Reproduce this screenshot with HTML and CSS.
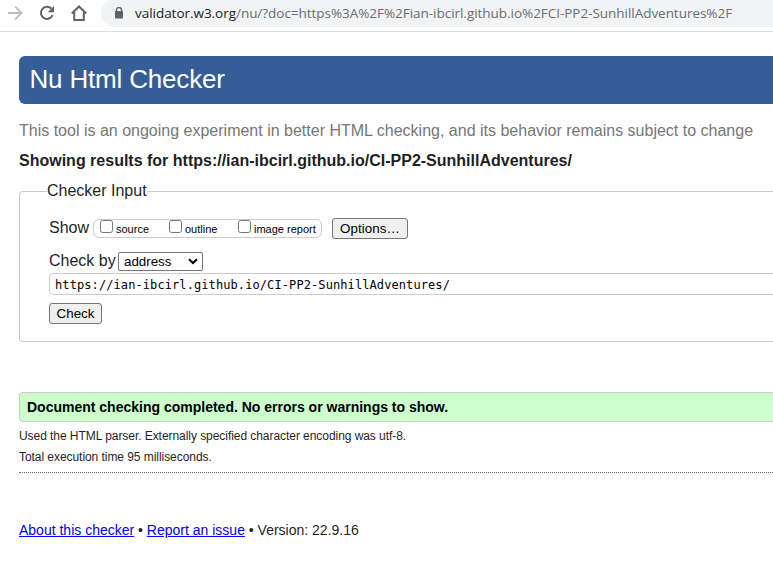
FILE: index.html
```html
<!DOCTYPE html>
<html lang="en">
<head>
<meta charset="utf-8">
<title>Nu Html Checker</title>
<link rel="stylesheet" href="styles.css">
</head>
<body>
<div class="toolbar">
  <svg class="nav" width="101" height="28" viewBox="0 0 101 28" fill="none">
    <path d="M8 13H21M15.2 6.7L21.5 13L15.2 19.3" stroke="#babcbe" stroke-width="1.8"/>
    <path d="M51.4 8.5A6.1 6.1 0 1 0 52.7 15" stroke="#5f6368" stroke-width="2"/>
    <path d="M54 6V12.3H47.7Z" fill="#5f6368"/>
    <path d="M71.8 13.5L79 6.5L86.2 13.5M74.2 12V20H83.8V12" stroke="#5f6368" stroke-width="2"/>
  </svg>
  <div class="address">
    <svg class="lock" width="10" height="12" viewBox="0 0 10 12"><path d="M2.4 5V3.2a2.6 2.6 0 0 1 5.2 0V5" fill="none" stroke="#5f6368" stroke-width="1.3"/><rect x="1" y="4" width="8" height="7.5" rx="1" fill="#5f6368"/></svg>
    <span class="url"><span class="host">validator.w3.org</span>/nu/?doc=https%3A%2F%2Fian-ibcirl.github.io%2FCI-PP2-SunhillAdventures%2F</span>
  </div>
</div>
<main>
  <h1>Nu Html Checker</h1>
  <p class="intro">This tool is an ongoing experiment in better HTML checking, and its behavior remains subject to change</p>
  <h2>Showing results for https://ian-ibcirl.github.io/CI-PP2-SunhillAdventures/</h2>
  <form class="panel">
    <div class="legend"><span>Checker Input</span></div>
    <div class="row show">
      <span class="label">Show</span>
      <div class="checks">
        <label class="c1"><input type="checkbox"><span>source</span></label>
        <label class="c2"><input type="checkbox"><span>outline</span></label>
        <label class="c3"><input type="checkbox"><span>image report</span></label>
      </div>
      <button type="button" class="options">Options…</button>
    </div>
    <div class="row by">
      <span class="label">Check by</span>
      <div class="select"><span>address</span><svg width="10" height="7" viewBox="0 0 10 7"><path d="M1 1.2L5 5L9 1.2" fill="none" stroke="#000" stroke-width="2"/></svg></div>
    </div>
    <div class="doc">https://ian-ibcirl.github.io/CI-PP2-SunhillAdventures/</div>
    <button type="button" class="check">Check</button>
  </form>
  <p class="success">Document checking completed. No errors or warnings to show.</p>
  <p class="detail parser">Used the HTML parser. Externally specified character encoding was utf-8.</p>
  <p class="detail time">Total execution time 95 milliseconds.</p>
  <hr>
  <footer><a href="#">About this checker</a> • <a href="#">Report an issue</a> • Version: 22.9.16</footer>
</main>
</body>
</html>
```

FILE: styles.css
```css
* { box-sizing: border-box; }
body {
  margin: 0;
  height: 568px;
  overflow: hidden;
  background: #fff;
  color: #1f1f1f;
  font-family: "Liberation Sans", Arial, sans-serif;
}
h1, h2, p { margin: 0; white-space: nowrap; }
.toolbar { display: flex; height: 32px; border-bottom: 1px solid #dadce0; }
.nav { flex: none; }
.address {
  flex: 1;
  display: flex;
  height: 28px;
  margin-top: -1px;
  padding-left: 13px;
  border-radius: 14px 0 0 14px;
  background: #f1f3f4;
}
.lock { margin-top: 8px; flex: none; }
.url {
  margin-left: 11px;
  font: 13.5px/28px "Open Sans", "Noto Sans", sans-serif;
  letter-spacing: -.035px;
  color: #6a6d71;
  white-space: nowrap;
}
.host { color: #202124; }
main { padding: 24px 0 0 19px; }
h1 {
  height: 48px;
  padding-left: 10.5px;
  border-radius: 6px 0 0 6px;
  background: #365d95;
  color: #fff;
  font-size: 26px;
  font-weight: 400;
  line-height: 46px;
  letter-spacing: -.18px;
}
.intro { margin-top: 17px; font-size: 16px; line-height: 20px; color: #767676; }
h2 { margin-top: 10px; font-size: 16px; line-height: 20px; }
.panel {
  height: 151px;
  margin-top: 20px;
  padding-left: 29px;
  border: 1px solid #ccc;
  border-right: 0;
  border-radius: 4px 0 0 4px;
}
.legend { height: 20px; margin: -11px 0 0 -2px; font-size: 16px; line-height: 20px; }
.legend span { display: inline-block; background: #fff; }
.row { display: flex; }
.show { height: 22px; margin-top: 17px; }
.label { font-size: 16px; line-height: 20px; }
.show .label { width: 44px; }
.checks {
  display: flex;
  width: 229px;
  height: 19px;
  margin-top: 1px;
  border: 1px solid #ccc;
  border-radius: 6px;
  font-size: 11px;
  color: #000;
}
.checks label { display: flex; }
.checks input { width: 13px; height: 13px; margin: 0 3px 0 0; flex: none; }
.checks span { line-height: 18px; white-space: nowrap; }
.c1 { width: 69px; margin-left: 6px; }
.c2 { width: 69px; }
button {
  height: 21px;
  padding: 0;
  border: 1px solid #767676;
  border-radius: 3px;
  background: #efefef;
  color: #000;
  font: 13.33px/18px "Liberation Sans", Arial, sans-serif;
}
.options { width: 76px; margin-left: 10px; letter-spacing: .1px; }
.by { height: 20px; margin-top: 11px; }
.by .label { width: 69px; }
.select {
  display: flex;
  justify-content: space-between;
  width: 85px;
  height: 19px;
  margin-top: 1px;
  padding: 0 4px 0 5px;
  border: 1px solid #767676;
  border-radius: 2px;
  font-size: 13.33px;
  line-height: 18px;
  color: #000;
}
.select svg { margin-top: 5px; }
.doc {
  height: 22px;
  margin-top: 2px;
  padding-left: 5px;
  border: 1px solid #ccc;
  border-right: 0;
  border-radius: 5px 0 0 5px;
  font: 12px/23px "DejaVu Sans Mono", monospace;
  letter-spacing: .09px;
  color: #000;
}
.check { display: block; width: 53px; margin-top: 8px; }
.success {
  height: 30px;
  margin-top: 50px;
  padding-left: 7px;
  border: 1px solid #ccc;
  border-right: 0;
  border-radius: 4px 0 0 4px;
  background: #cfc;
  color: #000;
  font-size: 14px;
  font-weight: 700;
  line-height: 29px;
}
.detail { font-size: 12px; line-height: 16px; letter-spacing: -.055px; }
.parser { margin-top: 6px; }
.time { margin-top: 5px; }
hr { margin: 7px 0 0; border: 0; border-top: 1px dotted #666; }
footer { margin-top: 47px; font-size: 14px; line-height: 20px; }
a { color: #00e; }
```
